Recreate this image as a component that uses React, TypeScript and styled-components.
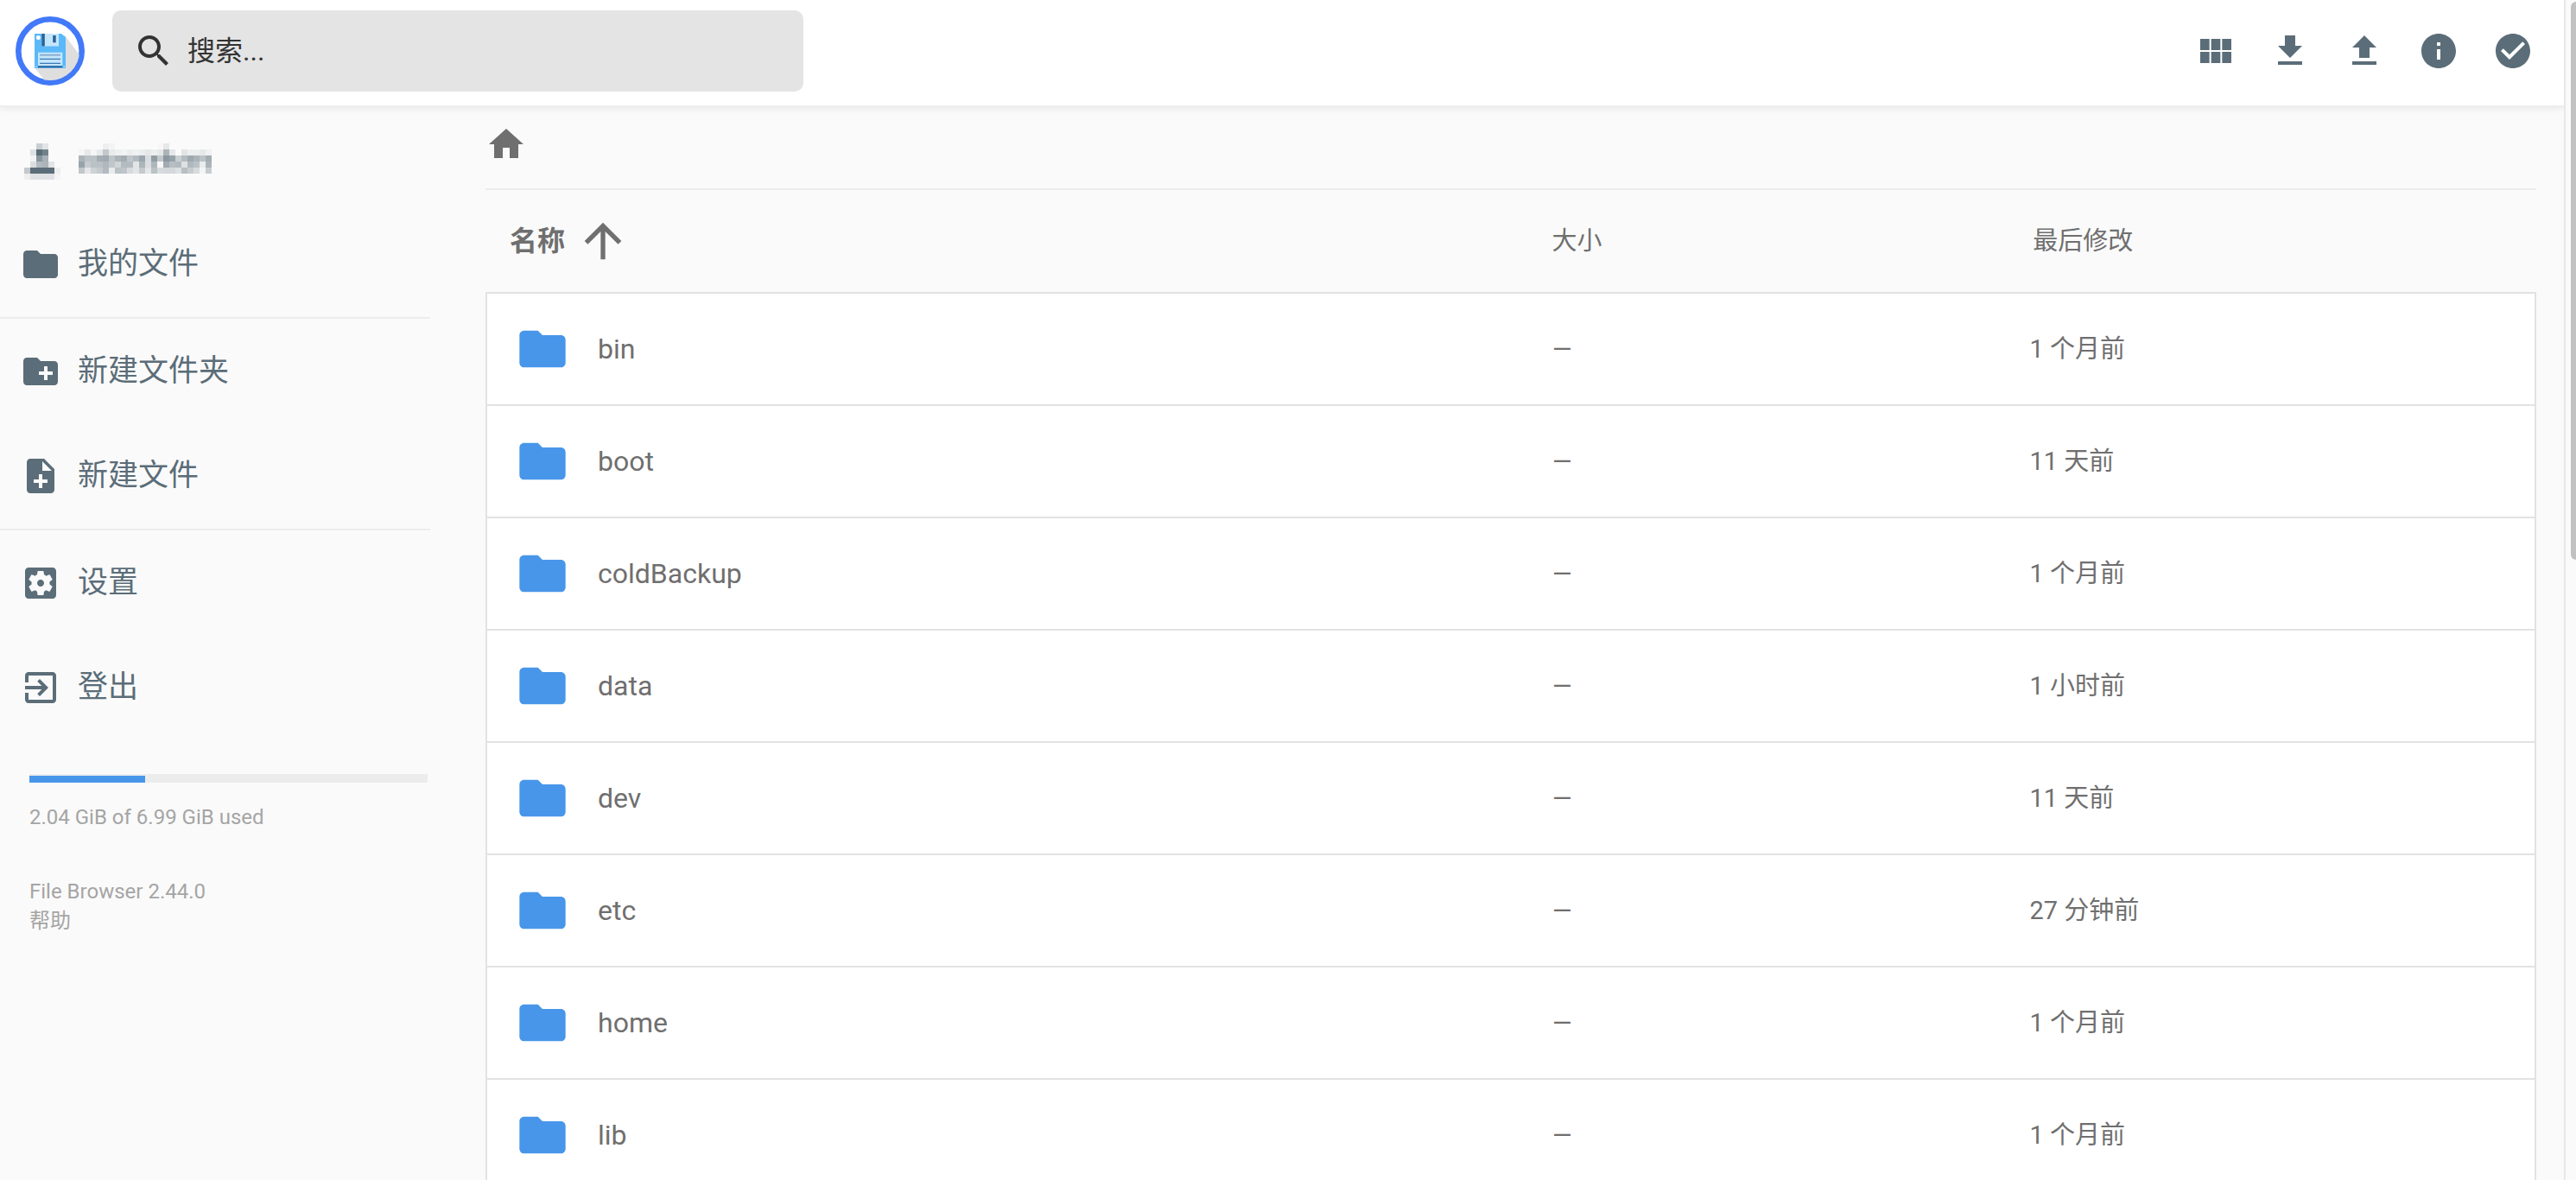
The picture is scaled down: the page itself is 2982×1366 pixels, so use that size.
import React from "react";
import styled, { createGlobalStyle } from "styled-components";

const color = {
  slate: "#5b6d78",
  blue: "#4896ea",
  text: "#6f6f6f",
  faint: "#a5a5a5",
  page: "#fafafa",
  line: "#ececec",
  tableLine: "#e2e2e2",
};

const GlobalStyle = createGlobalStyle`
  *, *::before, *::after { box-sizing: border-box; }
  body {
    margin: 0;
    background: ${color.page};
    color: ${color.text};
    font-family: Roboto, "Noto Sans CJK SC", sans-serif;
    line-height: 1.25;
  }
  button, input { font: inherit; color: inherit; }
`;

/* ---------- icons ---------- */

const paths = {
  search:
    "M15.5 14h-.79l-.28-.27C15.41 12.59 16 11.11 16 9.5 16 5.91 13.09 3 9.5 3S3 5.91 3 9.5 5.91 16 9.5 16c1.61 0 3.09-.59 4.23-1.57l.27.28v.79l5 4.99L20.49 19l-4.99-5zm-6 0C7.01 14 5 11.99 5 9.5S7.01 5 9.5 5 14 7.01 14 9.5 11.99 14 9.5 14z",
  grid:
    "M14.67 5v6.5H9.33V5h5.34zm1 6.5H21V5h-5.33v6.5zm-1 7.5v-6.5H9.33V19h5.34zm1-6.5V19H21v-6.5h-5.33zm-7.34 0H3V19h5.33v-6.5zm0-1V5H3v6.5h5.33z",
  download: "M19 9h-4V3H9v6H5l7 7 7-7zM5 18v2h14v-2H5z",
  upload: "M9 16h6v-6h4l-7-7-7 7h4zm-4 2h14v2H5z",
  info:
    "M12 2C6.48 2 2 6.48 2 12s4.48 10 10 10 10-4.48 10-10S17.52 2 12 2zm1 15h-2v-6h2v6zm0-8h-2V7h2v2z",
  check:
    "M12 2C6.48 2 2 6.48 2 12s4.48 10 10 10 10-4.48 10-10S17.52 2 12 2zm-2 15l-5-5 1.41-1.41L10 14.17l7.59-7.59L19 8l-9 9z",
  folder:
    "M10 4H4c-1.1 0-1.99.9-1.99 2L2 18c0 1.1.9 2 2 2h16c1.1 0 2-.9 2-2V8c0-1.1-.9-2-2-2h-8l-2-2z",
  newFolder:
    "M20 6h-8l-2-2H4c-1.11 0-1.99.89-1.99 2L2 18c0 1.11.89 2 2 2h16c1.11 0 2-.89 2-2V8c0-1.11-.89-2-2-2zm-1 8h-3v3h-2v-3h-3v-2h3V9h2v3h3v2z",
  newFile:
    "M14 2H6c-1.1 0-1.99.9-1.99 2L4 20c0 1.1.89 2 1.99 2H18c1.1 0 2-.9 2-2V8l-6-6zm2 14h-3v3h-2v-3H8v-2h3v-3h2v3h3v2zm-3-7V3.5L18.5 9H13z",
  settings:
    "M12 10c-1.1 0-2 .9-2 2s.9 2 2 2 2-.9 2-2-.9-2-2-2zm7-7H5c-1.11 0-2 .9-2 2v14c0 1.1.89 2 2 2h14c1.11 0 2-.9 2-2V5c0-1.1-.89-2-2-2zm-1.75 9c0 .23-.02.46-.05.68l1.48 1.16c.13.11.17.3.08.45l-1.4 2.42c-.09.15-.27.21-.43.15l-1.74-.7c-.36.28-.76.51-1.18.69l-.26 1.85c-.03.17-.18.3-.35.3h-2.8c-.17 0-.32-.13-.35-.29l-.26-1.85c-.43-.18-.82-.41-1.18-.69l-1.74.7c-.16.06-.34 0-.43-.15l-1.4-2.42c-.09-.15-.05-.34.08-.45l1.48-1.16c-.03-.23-.05-.46-.05-.69 0-.23.02-.46.05-.68l-1.48-1.16c-.13-.11-.17-.3-.08-.45l1.4-2.42c.09-.15.27-.21.43-.15l1.74.7c.36-.28.76-.51 1.18-.69l.26-1.85c.03-.17.18-.3.35-.3h2.8c.17 0 .32.13.35.29l.26 1.85c.43.18.82.41 1.18.69l1.74-.7c.16-.06.34 0 .43.15l1.4 2.42c.09.15.05.34-.08.45l-1.48 1.16c.03.23.05.46.05.69z",
  logout:
    "M10.09 15.59L11.5 17l5-5-5-5-1.41 1.41L12.67 11H3v2h9.67l-2.58 2.59zM19 3H5c-1.11 0-2 .9-2 2v4h2V5h14v14H5v-4H3v4c0 1.1.89 2 2 2h14c1.1 0 2-.9 2-2V5c0-1.1-.9-2-2-2z",
  home: "M10 20v-6h4v6h5v-8h3L12 3 2 12h3v8z",
  arrowUp: "M4 12l1.41 1.41L11 7.83V20h2V7.83l5.58 5.59L20 12l-8-8-8 8z",
};

type IconName = keyof typeof paths;

const IconSvg = styled.svg<{ $size: number }>`
  display: block;
  flex: none;
  width: ${(p) => p.$size}px;
  height: ${(p) => p.$size}px;
  fill: currentColor;
`;

function Icon({ name, size = 48 }: { name: IconName; size?: number }) {
  return (
    <IconSvg $size={size} viewBox="0 0 24 24" aria-hidden="true">
      <path d={paths[name]} />
    </IconSvg>
  );
}

const LogoSvg = styled.svg`
  display: block;
  flex: none;
  width: 80px;
  height: 80px;
`;

function Logo() {
  return (
    <LogoSvg viewBox="0 0 80 80" role="img" aria-label="File Browser">
      <defs>
        <clipPath id="logo-disc">
          <circle cx="40" cy="40" r="34" />
        </clipPath>
      </defs>
      <circle cx="40" cy="40" r="36.7" fill="#fff" stroke="#4279f8" strokeWidth="6.6" />
      <path d="M57 22L80 52V80H38L22 59z" fill="#dedede" clipPath="url(#logo-disc)" />
      <path d="M22 20H53L58 24V60H22z" fill="#5bb9fa" />
      <circle cx="26.4" cy="24.6" r="2.5" fill="#fff" />
      <path d="M30.3 20H50V34.5H30.3z" fill="#c4e6fc" />
      <path d="M30.3 20H33.8V34.5H30.3zM43.2 22H46.7V30.2H43.2z" fill="#2a6295" />
      <path d="M26 41.7H54.3V57.3H26z" fill="#c4e6fc" />
      <path d="M28 43.8H52V45.6H28z" fill="#86a9cd" />
      <path d="M28 48.8H52V50H28zM28 53.8H52V55H28z" fill="#3d79b4" />
      <path d="M26 57.3H54.3V59.2H26z" fill="#2a6295" />
      <path d="M23 57.6H24.4V59H23zM55.6 57.6H57V59H55.6z" fill="#c4e6fc" />
    </LogoSvg>
  );
}

/* ---------- redacted account ---------- */

const avatarCells = [
  [0, 0, 30, 15, 0, 0],
  [0, 18, 100, 86, 0, 0],
  [0, 5, 72, 52, 0, 0],
  [0, 20, 45, 50, 15, 0],
  [35, 100, 100, 100, 100, 8],
  [8, 17, 17, 17, 17, 4],
];

const nameCells = [
  [0, 0, 0, 0, 8, 4, 0, 0, 0, 0, 0, 0, 0, 2, 13, 0, 0, 0, 0, 0, 0, 0],
  [3, 12, 3, 12, 36, 11, 7, 5, 9, 6, 9, 13, 8, 13, 50, 13, 0, 15, 8, 8, 12, 6],
  [50, 40, 40, 55, 57, 38, 50, 55, 37, 45, 60, 20, 66, 36, 70, 62, 30, 44, 58, 50, 40, 55],
  [62, 32, 40, 40, 46, 36, 26, 44, 44, 15, 50, 20, 48, 2, 56, 42, 45, 18, 46, 40, 10, 50],
  [36, 14, 28, 34, 45, 10, 40, 38, 22, 15, 34, 14, 40, 22, 24, 24, 18, 42, 32, 22, 4, 32],
  [0, 0, 0, 0, 0, 0, 0, 0, 0, 0, 0, 0, 0, 0, 0, 0, 0, 0, 0, 0, 0, 0],
];

const MosaicSvg = styled.svg`
  display: block;
  flex: none;
  fill: ${color.slate};
`;

function Mosaic({ cells }: { cells: number[][] }) {
  const cell = 7;
  const width = cells[0].length * cell;
  const height = cells.length * cell;
  return (
    <MosaicSvg
      width={width}
      height={height}
      viewBox={`0 0 ${width} ${height}`}
      shapeRendering="crispEdges"
      aria-hidden="true"
    >
      {cells.flatMap((row, y) =>
        row.map((level, x) =>
          level ? (
            <rect
              key={`${x}-${y}`}
              x={x * cell}
              y={y * cell}
              width={cell}
              height={cell}
              fillOpacity={level / 100}
            />
          ) : null,
        ),
      )}
    </MosaicSvg>
  );
}

/* ---------- shell ---------- */

const Shell = styled.div`
  display: flex;
  height: 100vh;
  overflow: hidden;
`;

const Page = styled.div`
  display: flex;
  flex: 1;
  flex-direction: column;
  min-width: 0;
  overflow: hidden;
`;

const ScrollTrack = styled.div`
  flex: none;
  width: 14px;
  padding: 2px 0 0 6px;
  overflow: hidden;
  border-left: 2px solid #e8e8e8;
  background: ${color.page};
`;

const ScrollThumb = styled.div`
  width: 12px;
  border-radius: 6px;
  background: #c1c1c1;
`;

const Header = styled.header`
  position: relative;
  z-index: 1;
  display: flex;
  flex: none;
  align-items: center;
  padding: 12px 16px 16px 18px;
  border-bottom: 2px solid #eeeeee;
  background: #fff;
  box-shadow: 0 0 10px rgba(0, 0, 0, 0.1);
`;

const SearchBox = styled.label`
  display: flex;
  flex: 0 1 800px;
  align-items: center;
  gap: 15px;
  height: 94px;
  margin-left: 32px;
  padding: 0 24px;
  border-radius: 10px;
  background: #e4e4e4;
  color: #333;
`;

const SearchInput = styled.input`
  flex: 1;
  min-width: 0;
  padding: 0;
  border: 0;
  outline: 0;
  background: transparent;
  font-size: 32px;
  line-height: 48px;

  &::placeholder {
    color: #333;
    opacity: 1;
  }
`;

const Toolbar = styled.div`
  display: flex;
  margin-left: auto;
`;

const ToolButton = styled.button`
  padding: 19px;
  border: 0;
  background: none;
  color: ${color.slate};
  cursor: pointer;
`;

const Body = styled.div`
  display: flex;
  flex: 1;
  gap: 64px;
  min-height: 0;
`;

/* ---------- sidebar ---------- */

const Sidebar = styled.nav`
  flex: none;
  width: 498px;
`;

const Group = styled.div`
  padding-top: 1px;

  & + & {
    border-top: 2px solid ${color.line};
  }
`;

const NavItem = styled.button`
  display: flex;
  align-items: center;
  gap: 19px;
  width: 100%;
  padding: 36px 23px 37px;
  border: 0;
  background: none;
  color: ${color.slate};
  font-size: 35px;
  text-align: left;
  cursor: pointer;
`;

const AccountItem = styled(NavItem)`
  gap: 21px;
  padding: 41px 28px 38px;
`;

const Usage = styled.div`
  padding: 39px 3px 0 34px;
  color: ${color.faint};
  font-size: 24px;
  line-height: 34px;
`;

const Track = styled.div`
  height: 10px;
  padding-top: 2px;
  background: ${color.line};
`;

const Fill = styled.div`
  height: 8px;
  background: ${color.blue};
`;

const UsageText = styled.p`
  margin: 23px 0 52px;
`;

const Credits = styled.p`
  margin: 0;
`;

const HelpLink = styled.a`
  display: block;
  color: inherit;
  text-decoration: none;
`;

/* ---------- listing ---------- */

const Main = styled.main`
  flex: 1;
  min-width: 0;
  padding-right: 32px;
`;

const Breadcrumbs = styled.div`
  display: flex;
  padding: 19px 0 27px;
  border-bottom: 2px solid ${color.line};
`;

const HomeLink = styled.a`
  color: ${color.text};
`;

const Listing = styled.table`
  display: block;
  width: 100%;
`;

const Head = styled.thead`
  display: block;
`;

const HeadRow = styled.tr`
  display: grid;
  grid-template-columns: minmax(0, 1fr) 24% 24%;
  align-items: center;
  height: 118px;
  padding: 0 26px 0 28px;
`;

const HeadCell = styled.th`
  padding: 0;
  text-align: left;
`;

const SortButton = styled.button<{ $active?: boolean }>`
  display: flex;
  align-items: center;
  gap: 12px;
  padding: 0;
  border: 0;
  background: none;
  font-size: ${(p) => (p.$active ? 32 : 29)}px;
  font-weight: ${(p) => (p.$active ? 700 : 400)};
  cursor: pointer;
`;

const Rows = styled.tbody`
  display: block;
  border: 2px solid ${color.tableLine};
  background: #fff;
`;

const Row = styled.tr`
  display: grid;
  grid-template-columns: 96px minmax(0, 2fr) minmax(0, 1fr) minmax(0, 1fr);
  align-items: center;
  height: 128px;
  padding: 0 32px;

  & + & {
    height: 130px;
    border-top: 2px solid ${color.tableLine};
  }
`;

const Cell = styled.td`
  padding: 0;
  font-size: 29px;
`;

const IconCell = styled(Cell)`
  color: ${color.blue};
`;

const FileLink = styled.a`
  color: inherit;
  font-size: 32px;
  text-decoration: none;
`;

/* ---------- data ---------- */

const tools: { icon: IconName; label: string }[] = [
  { icon: "grid", label: "切换显示方式" },
  { icon: "download", label: "下载" },
  { icon: "upload", label: "上传" },
  { icon: "info", label: "信息" },
  { icon: "check", label: "选择多个" },
];

const files = [
  { name: "bin", modified: "1 个月前" },
  { name: "boot", modified: "11 天前" },
  { name: "coldBackup", modified: "1 个月前" },
  { name: "data", modified: "1 小时前" },
  { name: "dev", modified: "11 天前" },
  { name: "etc", modified: "27 分钟前" },
  { name: "home", modified: "1 个月前" },
  { name: "lib", modified: "1 个月前" },
];

const usedGiB = 2.04;
const totalGiB = 6.99;
const visibleShare = 0.473;

function NavEntry({ icon, children }: { icon: IconName; children: React.ReactNode }) {
  return (
    <NavItem type="button">
      <Icon name={icon} />
      <span>{children}</span>
    </NavItem>
  );
}

export default function App() {
  return (
    <>
      <GlobalStyle />
      <Shell>
        <Page>
          <Header>
            <Logo />
            <SearchBox>
              <Icon name="search" />
              <SearchInput type="text" placeholder="搜索..." aria-label="搜索" />
            </SearchBox>
            <Toolbar>
              {tools.map((tool) => (
                <ToolButton key={tool.icon} type="button" aria-label={tool.label}>
                  <Icon name={tool.icon} />
                </ToolButton>
              ))}
            </Toolbar>
          </Header>

          <Body>
            <Sidebar>
              <Group>
                <AccountItem type="button" aria-label="账户">
                  <Mosaic cells={avatarCells} />
                  <Mosaic cells={nameCells} />
                </AccountItem>
                <NavEntry icon="folder">我的文件</NavEntry>
              </Group>
              <Group>
                <NavEntry icon="newFolder">新建文件夹</NavEntry>
                <NavEntry icon="newFile">新建文件</NavEntry>
              </Group>
              <Group>
                <NavEntry icon="settings">设置</NavEntry>
                <NavEntry icon="logout">登出</NavEntry>
              </Group>
              <Usage>
                <Track
                  role="progressbar"
                  aria-label="存储空间"
                  aria-valuemin={0}
                  aria-valuemax={totalGiB}
                  aria-valuenow={usedGiB}
                >
                  <Fill style={{ width: `${Math.round((usedGiB / totalGiB) * 100)}%` }} />
                </Track>
                <UsageText>
                  {usedGiB} GiB of {totalGiB} GiB used
                </UsageText>
                <Credits>File Browser 2.44.0</Credits>
                <HelpLink href="#help">帮助</HelpLink>
              </Usage>
            </Sidebar>

            <Main>
              <Breadcrumbs>
                <HomeLink href="#home" aria-label="主页">
                  <Icon name="home" />
                </HomeLink>
              </Breadcrumbs>
              <Listing>
                <Head>
                  <HeadRow>
                    <HeadCell scope="col">
                      <SortButton type="button" $active>
                        名称
                        <Icon name="arrowUp" size={64} />
                      </SortButton>
                    </HeadCell>
                    <HeadCell scope="col">
                      <SortButton type="button">大小</SortButton>
                    </HeadCell>
                    <HeadCell scope="col">
                      <SortButton type="button">最后修改</SortButton>
                    </HeadCell>
                  </HeadRow>
                </Head>
                <Rows>
                  {files.map((file) => (
                    <Row key={file.name}>
                      <IconCell>
                        <Icon name="folder" size={64} />
                      </IconCell>
                      <Cell>
                        <FileLink href={`#${file.name}`}>{file.name}</FileLink>
                      </Cell>
                      <Cell>—</Cell>
                      <Cell>{file.modified}</Cell>
                    </Row>
                  ))}
                </Rows>
              </Listing>
            </Main>
          </Body>
        </Page>
        <ScrollTrack aria-hidden="true">
          <ScrollThumb style={{ height: `${visibleShare * 100}vh` }} />
        </ScrollTrack>
      </Shell>
    </>
  );
}
